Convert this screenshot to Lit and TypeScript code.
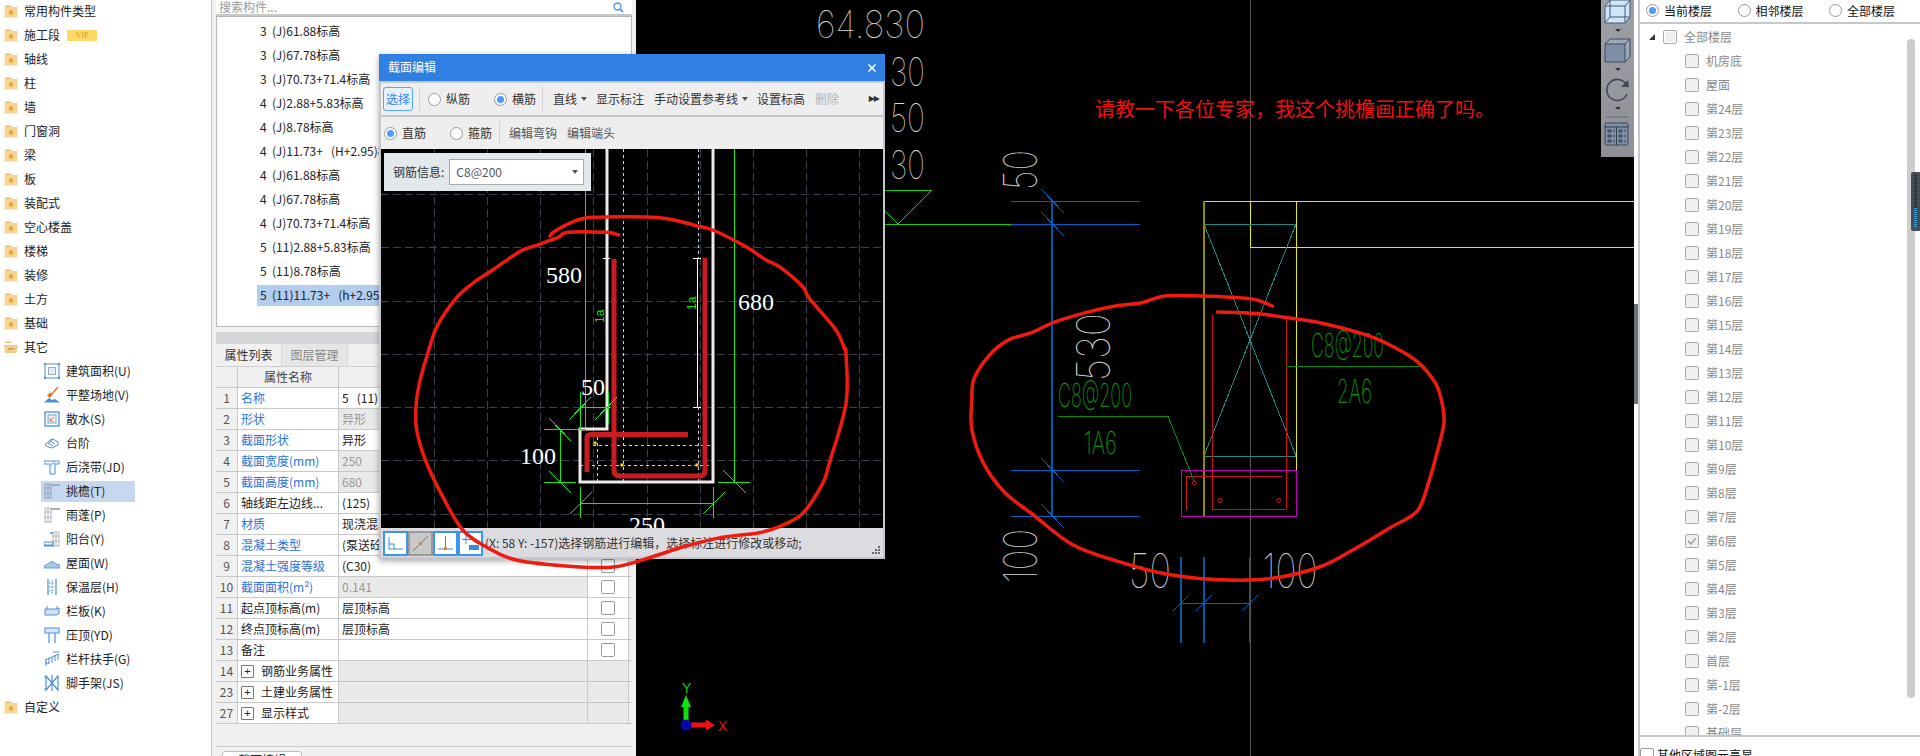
import { LitElement, html, css, svg } from "lit";
import { customElement } from "lit/decorators.js";

type P = [number, number];
function smooth(pts: P[]): string {
  let d = `M${pts[0][0]} ${pts[0][1]}`;
  for (let i = 0; i < pts.length - 1; i++) {
    const p0 = pts[Math.max(0, i - 1)], p1 = pts[i], p2 = pts[i + 1], p3 = pts[Math.min(pts.length - 1, i + 2)];
    const c1 = [p1[0] + (p2[0] - p0[0]) / 6, p1[1] + (p2[1] - p0[1]) / 6];
    const c2 = [p2[0] - (p3[0] - p1[0]) / 6, p2[1] - (p3[1] - p1[1]) / 6];
    d += `C${c1[0].toFixed(1)} ${c1[1].toFixed(1)} ${c2[0].toFixed(1)} ${c2[1].toFixed(1)} ${p2[0].toFixed(1)} ${p2[1].toFixed(1)}`;
  }
  return d;
}
const z3 = (a: number[][]): P[] => a.map(([x, y]) => [x / 3 + 376, y / 3 + 50]);
const z4 = (a: number[][]): P[] => a.map(([x, y]) => [x / 3 + 376, y / 3 + 340]);
const z5 = (a: number[][]): P[] => a.map(([x, y]) => [x / 2.178 + 880, y / 2.074]);

const scribbleDialog: P[] = [
  ...z3([[728, 555], [690, 547], [575, 547], [545, 563], [470, 590], [430, 605], [350, 660], [290, 700], [240, 745], [185, 825], [160, 895]]),
  ...z4([[130, 130], [120, 200], [122, 270], [150, 365], [200, 470], [260, 570], [330, 620], [420, 660], [600, 680], [720, 680], [830, 650], [930, 618], [1040, 592], [1150, 578], [1210, 560], [1280, 520], [1340, 430], [1360, 370], [1410, 190], [1410, 40]]),
  ...z3([[1405, 895], [1380, 840], [1300, 745], [1280, 710], [1210, 650], [1170, 630], [1110, 590], [1010, 540], [960, 527], [850, 503], [650, 502], [580, 520], [530, 548], [522, 558]]),
];
const scribbleCad: P[] = z5([[855, 635], [820, 622], [770, 617], [700, 614], [620, 614], [570, 628], [510, 635], [450, 648], [380, 668], [330, 690], [280, 705], [240, 735], [205, 785], [200, 830], [200, 890], [225, 960], [270, 1020], [330, 1065], [420, 1130], [520, 1165], [620, 1190], [730, 1202], [850, 1200], [960, 1175], [1040, 1135], [1110, 1095], [1170, 1060], [1195, 1000], [1210, 950], [1228, 880], [1225, 840], [1210, 795], [1170, 750], [1120, 720], [1060, 695], [960, 670], [880, 658], [820, 650], [735, 647]]);

const folder = (open = false) => html`<svg class="folder" viewBox="0 0 14 14" width="14" height="14">
  <path d="M1 3V1.6h6l1 1.4z" fill="#e8c27a"></path>
  ${open
    ? svg`<path d="M0 5h14l-1.5 8H1z" fill="#f0cf8e"></path><rect x="4" y="8" width="6" height="1.6" fill="#d2a24c"></rect>`
    : svg`<rect x="0.5" y="3" width="13" height="10.5" fill="#f3d596"></rect><path d="M7 6v5M4.5 8.5h5" stroke="#e59c2f" stroke-width="1.6"></path>`}
</svg>`;

const B = "#4a8fdc";
const G = "#8fa0b4";
const subIcons: Record<string, unknown> = {
  area: svg`<rect x="1" y="1" width="14" height="14" fill="none" stroke="${B}"></rect><rect x="4.5" y="4.5" width="7" height="7" fill="#e8eef6" stroke="#9ab"></rect><path d="M0 0h2v2H0zM14 0h2v2h-2zM0 14h2v2H0zM14 14h2v2h-2z" fill="${B}"></path>`,
  level: svg`<path d="M14 0L7 8" stroke="#e8702a" stroke-width="1.5"></path><path d="M8.5 7L6 11 3 8.500l3-3z" fill="#e8702a"></path><path d="M0 15.500L5 11l3 2 3-1 5 3.500z" fill="${B}"></path>`,
  apron: svg`<rect x="1" y="1" width="14" height="14" fill="#fff" stroke="${B}" stroke-width="1.3"></rect><rect x="4" y="4" width="8" height="8" fill="#eef3f9" stroke="${B}" stroke-width=".8"></rect><path d="M10 6L6.5 9.500M6 7v3h3" stroke="#e8702a" fill="none"></path>`,
  step: svg`<path d="M1 10l5-5 3-1 5 3v3l-6 3-4-1z" fill="#fff" stroke="${B}"></path><path d="M4 8l5 3M6 6l5 3M9 4l-5 5" stroke="${B}" fill="none"></path>`,
  band: svg`<path d="M0 2h15v3h-4v10H6V5H0z" fill="#fff" stroke="${B}"></path><path d="M6 9C6 6 8 4 11 4" stroke="#a8c4e4" stroke-width="2" fill="none"></path>`,
  eave: svg`<path d="M1 1h6v14H1zM1 5h6M1 10h6M4 1v14" fill="none" stroke="${G}"></path><path d="M7 2h9" stroke="${G}" stroke-width="1.5"></path>`,
  canopy: svg`<path d="M1 1h6v14H1zM1 5h6M1 10h6M4 1v14" fill="none" stroke="#aab0b8"></path><path d="M7 2h9" stroke="#8a96a6" stroke-width="1.5"></path>`,
  balcony: svg`<path d="M9 1h6v14H9zM9 5h6M9 10h6M12 1v14" fill="none" stroke="#aab0b8"></path><path d="M0 14h9M0 11h9v4H0z" fill="none" stroke="${B}" stroke-width="1.2"></path><path d="M6 2h3" stroke="${B}" stroke-width="1.5"></path>`,
  roof: svg`<path d="M0 11l5-3 3-2 4 3 4 1v3H0z" fill="#a8c6ea" stroke="${B}" stroke-width=".8"></path>`,
  insul: svg`<path d="M4 0v16M12 0v16" stroke="${B}" stroke-width="1.2"></path><path d="M8 1v14M5 4h6M5 8h6M5 12h6" stroke="${B}" stroke-dasharray="1.5 1.5"></path>`,
  rail: svg`<path d="M1 6h12l2-1v5l-2 2H1z" fill="#cfe0f4" stroke="${B}"></path><path d="M3 6V3M13 6V3" stroke="${B}"></path>`,
  cap: svg`<rect x="1" y="1" width="14" height="5" fill="#dce8f6" stroke="${B}"></rect><path d="M5 6v10M11 6v10" stroke="${B}" stroke-width="1.2"></path>`,
  rail2: svg`<path d="M1 9l14-6M2 8v7M5 7v6M8 6v6M11 4v6M14 3v6M1 12h4" fill="none" stroke="${B}"></path><path d="M9 1h6" stroke="${B}"></path>`,
  scaffold: svg`<path d="M2 0v16M14 0v16M2 1l12 14M14 1L2 15M8 0v16" fill="none" stroke="${B}" stroke-width="1.2"></path><path d="M0 2h2M0 14h2" stroke="${B}"></path>`,
};

const topFolders = ["常用构件类型", "施工段", "轴线", "柱", "墙", "门窗洞", "梁", "板", "装配式", "空心楼盖", "楼梯", "装修", "土方", "基础"];
const subs: [string, string][] = [
  ["建筑面积(U)", "area"], ["平整场地(V)", "level"], ["散水(S)", "apron"], ["台阶", "step"], ["后浇带(JD)", "band"],
  ["挑檐(T)", "eave"], ["雨蓬(P)", "canopy"], ["阳台(Y)", "balcony"], ["屋面(W)", "roof"], ["保温层(H)", "insul"],
  ["栏板(K)", "rail"], ["压顶(YD)", "cap"], ["栏杆扶手(G)", "rail2"], ["脚手架(JS)", "scaffold"],
];
const comps = ["3  (J)61.88标高", "3  (J)67.78标高", "3  (J)70.73+71.4标高", "4  (J)2.88+5.83标高", "4  (J)8.78标高", "4  (J)11.73+   (H+2.95)标高", "4  (J)61.88标高", "4  (J)67.78标高", "4  (J)70.73+71.4标高", "5  (11)2.88+5.83标高", "5  (11)8.78标高", "5  (11)11.73+   (h+2.95)标高"];

type Row = { n: number; name: string; val?: string; blue?: boolean; grayVal?: boolean; check?: boolean; group?: boolean };
const rows: Row[] = [
  { n: 1, name: "名称", val: "5   (11)  11.73+   (h+2.95)标高", blue: true, check: true },
  { n: 2, name: "形状", val: "异形", blue: true, grayVal: true, check: true },
  { n: 3, name: "截面形状", val: "异形", blue: true, check: true },
  { n: 4, name: "截面宽度(mm)", val: "250", blue: true, grayVal: true, check: true },
  { n: 5, name: "截面高度(mm)", val: "680", blue: true, grayVal: true, check: true },
  { n: 6, name: "轴线距左边线...", val: "(125)", check: true },
  { n: 7, name: "材质", val: "现浇混凝土", blue: true, check: true },
  { n: 8, name: "混凝土类型", val: "(泵送砼)", blue: true, check: true },
  { n: 9, name: "混凝土强度等级", val: "(C30)", blue: true, check: true },
  { n: 10, name: "截面面积(m²)", val: "0.141", blue: true, grayVal: true, check: true },
  { n: 11, name: "起点顶标高(m)", val: "层顶标高", check: true },
  { n: 12, name: "终点顶标高(m)", val: "层顶标高", check: true },
  { n: 13, name: "备注", val: "", check: true },
  { n: 14, name: "钢筋业务属性", group: true },
  { n: 23, name: "土建业务属性", group: true },
  { n: 27, name: "显示样式", group: true },
];
const floors = ["机房底", "屋面", ...Array.from({ length: 23 }, (_, i) => `第${24 - i}层`), "首层", "第-1层", "第-2层", "基础层"];

const cadText = (cx: number, cy: number, w: number, h: number, t: string, cls: string, rot = false) => svg`<text class="cad ${cls}" x="${cx}" y="${cy + h / 2}" text-anchor="middle" font-size="${h / 0.727}" textLength="${w}" lengthAdjust="spacingAndGlyphs" transform="${rot ? `rotate(-90 ${cx} ${cy})` : ""}">${t}</text>`;
const ln = (x1: number, y1: number, x2: number, y2: number, cls: string) => svg`<line x1="${x1}" y1="${y1}" x2="${x2}" y2="${y2}" class="${cls}"></line>`;

@customElement("app-root")
export class AppRoot extends LitElement {
  static styles = css`
    :host { display: block; width: 1920px; height: 756px; position: relative; overflow: hidden; background: #f0f0f0;
      font: 12px/1.2 "Noto Sans CJK SC", "Noto Sans", sans-serif; color: #222; }
    .app { display: flex; height: 756px; }
    .tree { width: 211px; height: 756px; background: #fff; border-right: 1px solid #c4c4c4; overflow: hidden; flex: none; }
    .tree-inner { margin-top: -1px; }
    .trow { height: 24px; display: flex; align-items: center; padding-left: 4px; white-space: nowrap; }
    .folder { margin-right: 6px; flex: none; }
    .vip { margin-left: 7px; width: 30px; height: 11px; background: #ffd966; color: #c9a227; font: 8px/11px "Liberation Serif", serif; text-align: center; }
    .srow { height: 24px; display: flex; align-items: center; padding-left: 41px; }
    .sitem { display: flex; align-items: center; height: 21px; width: 94px; padding-left: 3px; box-sizing: border-box; white-space: nowrap; }
    .sitem svg { margin-right: 6px; flex: none; }
    .sitem.cur { background: #c5d8ef; }
    .mid { width: 416px; margin-left: 4px; margin-right: 4px; flex: none; height: 756px; display: flex; flex-direction: column; overflow: hidden; }
    .search { height: 14px; flex: none; background: #fff; border-bottom: 2px solid #c8c8c8; display: flex; align-items: center; justify-content: space-between; padding: 0 8px 0 3px; color: #999; box-sizing: content-box; }
    .list { height: 307px; flex: none; background: #fff; border: 1px solid #b8b8b8; padding: 2px 0 0 40px; overflow: hidden; }
    .citem { height: 24px; display: flex; align-items: center; padding-left: 3px; white-space: pre; }
    .citem span { display: flex; align-items: center; height: 21px; flex: 1; margin-left: -3px; padding-left: 3px; }
    .citem.cur span { background: #b3cdee; }
    .strip { height: 12px; flex: none; margin-top: 5px; background: #d4d6da; }
    .tabs { height: 22px; flex: none; display: flex; background: #f0f0f0; }
    .tab { width: 65px; display: flex; align-items: center; justify-content: center; color: #333; border-right: 1px solid #d8d8d8; }
    .tab.off { color: #888; background: #e6e6e6; }
    .table { flex: none; background: #f0f0f0; }
    .tr { display: grid; grid-template-columns: 22px 101px 249px 41px; height: 21px; box-sizing: border-box; border-bottom: 1px solid #c8c8c8; }
    .tr.head { height: 22px; border-top: 1px solid #d0d0d0; }
    .tr > div { display: flex; align-items: center; padding-left: 3px; border-right: 1px solid #c8c8c8; white-space: pre; overflow: hidden; background: #fff; }
    .tr > .num { background: #f0f0f0; justify-content: center; padding: 0; color: #555; }
    .tr > .gray { background: #e9e9e9; color: #999; }
    .tr > .gfill { background: #e9e9e9; }
    .tr > .hd { background: #f0f0f0; justify-content: center; padding: 0; color: #444; }
    .blue { color: #2c72d8; }
    .tr > .chk { justify-content: center; padding: 0; }
    .cb { width: 12px; height: 12px; border: 1px solid #999; border-radius: 2px; background: #fff; flex: none; }
    .plus { width: 11px; height: 11px; border: 1px solid #777; border-radius: 1px; margin-right: 7px; display: flex; align-items: center; justify-content: center; font: 11px/11px "Liberation Sans", sans-serif; flex: none; background: #fff; }
    .blank { height: 22px; flex: none; background: #f0f0f0; border-bottom: 1px solid #c8c8c8; }
    .bbtn { width: 78px; margin: 4px 0 0 6px; height: 24px; flex: none; background: #fff; border: 1px solid #bbb; border-radius: 3px; text-align: center; line-height: 16px; }
    .cad { width: 998px; flex: none; height: 756px; background: #000; position: relative; overflow: hidden; }
    .cad > svg { display: block; }
    .sidebar { flex: 1; position: relative; height: 756px; background: #fff; display: flex; }
    .gut { width: 4px; flex: none; background: #fff; display: flex; flex-direction: column; }
    .gut i { display: block; margin-top: 304px; height: 100px; background: #6a7178; }
    .rp { flex: 1; border-left: 2px solid #c4c8cc; border-right: 1px solid #c4c8cc; display: flex; flex-direction: column; position: relative; overflow: hidden; }
    .rtop { height: 22px; flex: none; display: flex; align-items: center; padding-left: 6px; border-bottom: 2px solid #c4c8cc; color: #111; }
    .rtop label { display: flex; align-items: center; width: 91.5px; flex: none; }
    .rlist { height: 711px; flex: none; overflow: hidden; padding-top: 1px; box-sizing: border-box; color: #888; }
    .frow { height: 24px; display: flex; align-items: center; }
    .frow.all { padding-left: 9px; }
    .frow.sub { padding-left: 45px; }
    .tri { width: 0; height: 0; border-left: 6px solid transparent; border-bottom: 6px solid #333; margin-right: 8px; }
    .box { width: 12px; height: 12px; border: 1px solid #aaa; border-radius: 2px; background: #f0f0f0; margin-right: 7px; flex: none; display: flex; align-items: center; justify-content: center; }
    .all .box { margin-right: 7px; box-shadow: inset 0 0 0 1px #fff; }
    .rbot { flex: 1; border-top: 2px solid #c8c8c8; display: flex; align-items: flex-start; padding: 11px 0 0 0; color: #111; line-height: 14px; white-space: nowrap; }
    .rbot .cb { margin-right: 3px; }
    .sb { position: absolute; left: 267px; top: 39px; width: 8px; height: 659px; background: #ccc; border-radius: 4px; }
    .handle { position: absolute; left: 271px; top: 172px; display: block; }
    .radio { width: 13px; height: 13px; box-sizing: border-box; border: 1px solid #999; border-radius: 50%; background: #fff; margin-right: 5px; flex: none; display: flex; align-items: center; justify-content: center; }
    .radio.on::after { content: ""; width: 7px; height: 7px; border-radius: 50%; background: #4a9cff; }
    .float { position: absolute; left: 965px; top: 0; width: 33px; height: 157px; background: linear-gradient(#9ea0a6, #8e9096); }
    .float svg { display: block; }
    .dialog { position: absolute; left: 379px; top: 54px; width: 506px; height: 505px; background: #c4c8cc; box-shadow: 0 2px 6px rgba(0,0,0,.35); display: flex; flex-direction: column; }
    .title { height: 27px; flex: none; background: #2f80e2; color: #fff; display: flex; align-items: center; justify-content: space-between; padding: 0 8px 0 9px; }
    .title svg { display: block; }
    .tb { flex: none; background: #eee; margin: 2px 2px 0 2px; height: 32px; display: flex; align-items: center; color: #333; }
    .tb.two { height: 32px; margin-top: 2px; }
    .selbtn { width: 30px; height: 24px; box-sizing: border-box; margin-left: 2px; border: 1px solid #5aa2f2; border-radius: 3px; background: #e6f1fd; color: #2f86ea; display: flex; align-items: center; justify-content: center; }
    .sep { width: 1px; height: 24px; background: #d0d0d0; flex: none; }
    .tb .radio { margin-right: 5px; }
    .tb span { white-space: nowrap; flex: none; }
    .ml3 { margin-left: 3px; } .ml6 { margin-left: 6px; } .ml7 { margin-left: 7px; } .ml8 { margin-left: 8px; } .ml9 { margin-left: 9px; } .ml10 { margin-left: 10px; } .ml24 { margin-left: 24px; } .ml4 { margin-left: 4px; }
    .caret { width: 0; height: 0; border: 3.5px solid transparent; border-top: 4px solid #555; border-bottom: 0; flex: none; }
    .dis { color: #b4b4b4; }
    .dim { color: #555; }
    .more { margin-left: auto; margin-right: 4px; font: 8px/1 "DejaVu Sans", sans-serif; letter-spacing: -1px; color: #333; }
    .canvas { flex: none; height: 379px; margin: 0 2px; background: #000; position: relative; overflow: hidden; }
    .canvas svg { display: block; }
    .info { position: absolute; left: 3px; top: 4px; width: 207px; height: 38px; background: #e3e8ea; display: flex; align-items: center; padding-left: 9px; box-sizing: border-box; color: #333; white-space: nowrap; }
    .sel { margin-left: 5px; width: 135px; height: 26px; box-sizing: border-box; background: #fff; border: 1px solid #aaa; display: flex; align-items: center; justify-content: space-between; padding: 0 5px 0 6px; color: #555; }
    .status { flex: 1; margin: 0 2px 2px; padding: 1px 0 0 2px; background: #dcdce0; display: flex; align-items: center; white-space: nowrap; color: #333; position: relative; }
    .sbtn { width: 25px; height: 25px; box-sizing: border-box; background: #fff; border: 2px solid #3c96f0; flex: none; }
    .sbtn.on { background: #c8c8c8; border-color: #9a9a9a; }
    .sbtn svg { display: block; }
    .status .msg { margin-left: 2px; font-size: 12px; }
    .grip { position: absolute; right: 2px; bottom: 2px; }
    .overlay { position: absolute; left: 0; top: 0; pointer-events: none; }
    text.cad { font-family: Inter, Roboto, "Liberation Sans", sans-serif; font-weight: 100; }
    text.w { fill: #d4d4d4; }
    text.g { fill: #0c8c0c; font-weight: 200; }
    text.d { font-family: "Liberation Serif", serif; font-size: 24px; fill: #fff; text-anchor: middle; }
    text.la { font-family: "Liberation Sans", sans-serif; font-size: 12px; fill: #18e018; }
    text.ask { font-size: 20px; fill: #f01010; font-family: "Noto Sans CJK SC", sans-serif; }
    text.ax { font-family: "Liberation Sans", sans-serif; font-size: 14px; }
    line { shape-rendering: crispEdges; }
    line.bl { stroke: #0060c4; stroke-width: 1; }
    line.bl2 { stroke: #0058a8; stroke-width: 2; }
    line.ye { stroke: #e8e800; stroke-width: 1; }
    line.ol { stroke: #8c8c00; stroke-width: 2; }
    line.te { stroke: #178c8c; stroke-width: 1; }
    line.re { stroke: #d01010; stroke-width: 1; }
    line.gl { stroke: #0a8a0a; stroke-width: 1; }
    line.br { stroke: #12d012; stroke-width: 1; }
    line.grey { stroke: #555; stroke-width: 1; }
    line.gb { stroke: #18e818; stroke-width: 1; }
    line.grid { stroke: #3a4250; stroke-width: 1; stroke-dasharray: 8 4; }
    line.dash { stroke: #c8d4e0; stroke-width: 1; stroke-dasharray: 3 3; }
    line.wh { stroke: #fff; stroke-width: 1; }
    .scrib { fill: none; stroke: #f01a10; stroke-width: 3.5; stroke-linecap: round; stroke-linejoin: round; }
  `;

  private cadDrawing() {
    const ticks: P[] = [[1052, 201], [1052, 224], [1052, 470], [1052, 516]];
    const bt = [1181, 1204, 1250];
    return html`<svg width="998" height="756" viewBox="636 0 998 756">
      ${cadText(870.5, 24, 109, 28, "64.830", "w")}
      ${cadText(907.5, 71, 35, 29, "30", "w")}
      ${cadText(907.5, 117, 35, 29, "50", "w")}
      ${cadText(907.5, 164, 35, 29, "30", "w")}
      ${ln(885, 190, 932, 190, "br")}${ln(932, 190, 898, 224, "br")}${ln(885, 211, 898, 224, "br")}${ln(885, 224, 1052, 224, "br")}
      ${[201.5, 224, 470, 516].map((y) => ln(1011, y, 1140, y, "bl"))}
      ${ln(1052, 201, 1052, 516, "bl2")}
      ${ticks.map(([x, y]) => ln(x - 11, y - 12, x + 12, y + 12, "bl"))}
      ${cadText(1020, 170, 40, 34, "50", "w", true)}
      ${cadText(1093, 347, 68, 34, "530", "w", true)}
      ${cadText(1020, 556, 54, 34, "100", "w", true)}
      ${cadText(1150, 570, 42, 35, "50", "w")}
      ${cadText(1290, 570, 55, 35, "100", "w")}
      ${bt.map((x) => ln(x, 557, x, 643, "bl2"))}
      ${ln(1181, 603, 1250, 603, "bl")}
      ${bt.map((x) => ln(x - 8, 611, x + 8, 595, "bl"))}
      ${ln(1250.5, 0, 1250.5, 756, "grey")}
      ${ln(1204, 201.5, 1634, 201.5, "ye")}${ln(1296, 201, 1296, 470, "ye")}${ln(1250.5, 201, 1250.5, 247.5, "ye")}${ln(1250, 247.5, 1634, 247.5, "ye")}
      ${ln(1204, 224, 1296, 224, "te")}${ln(1204, 456, 1296, 456, "te")}${ln(1204, 224, 1296, 456, "te")}${ln(1296, 224, 1204, 456, "te")}
      ${ln(1204, 201, 1204, 516, "ol")}
      ${ln(1212, 315, 1212, 509, "re")}${ln(1286, 316, 1286, 509, "re")}${ln(1212, 509, 1286, 509, "re")}
      ${ln(1186, 510, 1186, 476, "re")}${ln(1186, 476, 1282, 476, "re")}
      <rect x="1181" y="470" width="115" height="46" fill="none" stroke="#c000c0" shape-rendering="crispEdges"></rect>
      ${[[1194.5, 483], [1220, 500.5], [1279, 500.5]].map(([x, y]) => svg`<circle cx="${x}" cy="${y}" r="2" fill="none" stroke="#e01010"></circle>`)}
      ${ln(1286, 366, 1426, 366, "gl")}${ln(1058, 416.5, 1168, 416.5, "gl")}${ln(1168, 416.5, 1194.5, 482, "gl")}
      ${cadText(1095, 395, 74, 24, "C8@200", "g")}
      ${cadText(1100.5, 442.5, 33, 23, "1A6", "g")}
      ${cadText(1347.5, 344.5, 73, 24, "C8@200", "g")}
      ${cadText(1354.5, 391, 35, 24, "2A6", "g")}
      <text class="ask" x="1095" y="117">请教一下各位专家，我这个挑檐画正确了吗。</text>
      <path d="M683.5 725v-18h-2.5l5-12 5 12h-2.500v18z" fill="#10e010"></path>
      <path d="M686 722.500h20v-3l9 5.500-9 5.500v-3h-20z" fill="#f01010"></path>
      <circle cx="686" cy="725" r="5.500" fill="#0808a8"></circle>
      <text class="ax" x="682" y="693" fill="#10d010">Y</text>
      <text class="ax" x="718" y="731" fill="#e81010">X</text>
    </svg>`;
  }

  private dialogDrawing() {
    const hg = [194, 247, 301, 354, 407, 460, 514];
    const vg = [434, 487, 540, 593, 647, 700, 753, 806, 859];
    const R = "#c81c22";
    return html`<svg width="502" height="379" viewBox="381 149 502 379">
      ${hg.map((y) => ln(381, y, 883, y, "grid"))}
      ${vg.map((x) => ln(x, 149, x, 528, "grid"))}
      ${ln(585, 149, 585, 429, "gb")}${ln(734, 149, 734, 482, "gb")}
      ${ln(623, 149, 623, 482, "dash")}${ln(698, 149, 698, 258, "dash")}${ln(698, 407, 698, 482, "dash")}
      ${ln(593, 445, 713, 445, "dash")}${ln(580, 465, 713, 465, "dash")}${ln(597, 437, 597, 482, "dash")}
      ${ln(697, 258, 697, 407, "wh")}${ln(693, 258, 701, 258, "wh")}${ln(693, 407, 701, 407, "wh")}
      ${ln(603, 258, 610, 258, "wh")}${ln(603, 407, 610, 407, "wh")}
      <path d="M607 149V429H580V482H713V149" fill="none" stroke="#ececec" stroke-width="3"></path>
      <path d="M614 259V470Q614 476 620 476H700Q705 476 705 470V258" fill="none" stroke="${R}" stroke-width="5"></path>
      <path d="M587 472V438Q587 434.500 591 434.500H688" fill="none" stroke="${R}" stroke-width="5"></path>
      ${[[595, 443], [622, 465], [697, 465]].map(([x, y]) => svg`<circle cx="${x}" cy="${y}" r="1.800" fill="#f0d030" stroke="#806000" stroke-width=".5"></circle>`)}
      ${ln(544, 429, 586, 429, "gb")}${ln(544, 482, 576, 482, "gb")}${ln(560, 429, 560, 482, "gb")}
      ${ln(549, 418, 571, 441, "gb")}${ln(549, 471, 571, 493, "gb")}
      ${ln(580, 407, 608, 407, "gb")}${ln(580, 392, 580, 429, "gb")}${ln(608, 392, 608, 424, "gb")}
      ${ln(569, 420, 591, 397, "gb")}${ln(595, 420, 617, 397, "gb")}
      ${ln(580, 503, 713, 503, "gb")}${ln(580, 487, 580, 518, "gb")}${ln(713, 487, 713, 518, "gb")}
      ${ln(570, 514, 592, 492, "gb")}${ln(703, 514, 725, 492, "gb")}
      ${ln(718, 482, 750, 482, "gb")}${ln(723, 470, 746, 493, "gb")}
      <text class="d" x="564" y="283">580</text>
      <text class="d" x="756" y="310">680</text>
      <text class="d" x="593" y="395">50</text>
      <text class="d" x="538" y="464">100</text>
      <text class="d" x="647" y="533">250</text>
      <text class="la" transform="translate(604 323) rotate(-90)">1a</text>
      <text class="la" transform="translate(696 310) rotate(-90)">1a</text>
    </svg>`;
  }

  render() {
    return html`<div class="app">
      <div class="tree"><div class="tree-inner">
        ${topFolders.map((t) => html`<div class="trow">${folder()}<span>${t}</span>${t === "施工段" ? html`<span class="vip">VIP</span>` : ""}</div>`)}
        <div class="trow">${folder(true)}<span>其它</span></div>
        ${subs.map(([t, k]) => html`<div class="srow"><div class="sitem ${k === "eave" ? "cur" : ""}"><svg width="16" height="16" viewBox="0 0 16 16">${subIcons[k]}</svg><span>${t}</span></div></div>`)}
        <div class="trow">${folder()}<span>自定义</span></div>
      </div></div>
      <div class="mid">
        <div class="search"><span>搜索构件...</span>
          <svg width="11" height="11" viewBox="0 0 11 11"><circle cx="4.500" cy="4.500" r="3.500" fill="none" stroke="#5a9ad8" stroke-width="1.400"></circle><path d="M7 7l3 3" stroke="#5a9ad8" stroke-width="1.800"></path></svg>
        </div>
        <div class="list">${comps.map((c, i) => html`<div class="citem ${i === 11 ? "cur" : ""}"><span>${c}</span></div>`)}</div>
        <div class="strip"></div>
        <div class="tabs"><div class="tab">属性列表</div><div class="tab off">图层管理</div></div>
        <div class="table">
          <div class="tr head"><div class="hd"></div><div class="hd">属性名称</div><div class="hd"></div><div class="hd"></div></div>
          ${rows.map((r) => html`<div class="tr">
            <div class="num">${r.n}</div>
            <div class="${r.blue ? "blue" : ""}">${r.group ? html`<span class="plus">+</span>` : ""}${r.name}</div>
            <div class="${r.group ? "gfill" : r.grayVal ? "gray" : ""}">${r.val ?? ""}</div>
            <div class="chk ${r.group ? "gfill" : ""}">${r.check ? html`<span class="cb"></span>` : ""}</div>
          </div>`)}
        </div>
        <div class="blank"></div>
        <div class="bbtn">截面编辑</div>
      </div>
      <div class="cad">
        ${this.cadDrawing()}
        <div class="float">
          <svg width="33" height="157" viewBox="0 0 33 157">
            <path d="M4 6l5-6h20v17l-5 6H4z" fill="#cfe4fb" stroke="#46586e"></path><path d="M4 6h20v17M24 6l5-6M9 0v17h20M9 17l-5 6" fill="none" stroke="#46586e"></path>
            <path d="M14 29h6l-3 3z" fill="#333"></path>
            <path d="M4 44l5-5h20v18l-5 5z" fill="#9aa8bc" stroke="#3e4a5c"></path><path d="M4 44h20v18H4z" fill="#7e8ea6" stroke="#3e4a5c"></path><path d="M24 44l5-5" stroke="#3e4a5c"></path>
            <path d="M14 68h6l-3 3z" fill="#333"></path>
            <path d="M25 84A10.500 10.500 0 1 0 26 94" fill="none" stroke="#3e4a5c" stroke-width="1.600"></path><path d="M20 87l8 0 -1-7z" fill="#3e4a5c"></path>
            <path d="M14 107h6l-3 3z" fill="#333"></path>
            <path d="M5 117h23" stroke="#6a6c72"></path>
            <rect x="4" y="123" width="23" height="22" rx="1" fill="#7e8ea6" stroke="#3e4a5c"></rect>
            <path d="M4 127h23M15.500 127v18M7 130h3v2H7zM7 135h3v2H7zM7 140h3v2H7zM18 130h3v2h-3zM18 135h3v2h-3zM18 140h3v2h-3zM12 131h2M12 136h2M12 141h2M23 131h2M23 136h2M23 141h2" fill="none" stroke="#1e2a3a" stroke-width=".8"></path>
          </svg>
        </div>
      </div>
      <div class="sidebar">
        <div class="gut"><i></i></div>
        <div class="rp">
          <div class="rtop">
            <label><span class="radio on"></span><span>当前楼层</span></label>
            <label><span class="radio"></span><span>相邻楼层</span></label>
            <label><span class="radio"></span><span>全部楼层</span></label>
          </div>
          <div class="rlist">
            <div class="frow all"><span class="tri"></span><span class="box"></span><span>全部楼层</span></div>
            ${floors.map((f) => html`<div class="frow sub"><span class="box">${f === "第6层" ? html`<svg width="10" height="10" viewBox="0 0 10 10"><path d="M1 5l3 3 5-6" fill="none" stroke="#aaa" stroke-width="1.800"></path></svg>` : ""}</span><span>${f}</span></div>`)}
          </div>
          <div class="rbot"><span class="cb"></span><span>其他区域图元亮显</span></div>
          <div class="sb"></div>
          <svg class="handle" width="10" height="59" viewBox="0 0 10 59">
            <rect width="10" height="59" rx="2" fill="#454c55"></rect>
            <path d="M4.500 3v33" stroke="#23282e" stroke-width="3" stroke-dasharray="1 1"></path>
            <path d="M4.500 36v20" stroke="#3f9ad0" stroke-width="3" stroke-dasharray="1 1"></path>
          </svg>
        </div>
      </div>
    </div>
    <div class="dialog">
      <div class="title"><span>截面编辑</span><svg width="10" height="10" viewBox="0 0 10 10"><path d="M1.500 1.500l7 7M8.500 1.500l-7 7" stroke="#fff" stroke-width="1.600"></path></svg></div>
      <div class="tb">
        <div class="selbtn">选择</div><div class="sep ml6"></div>
        <span class="radio ml8"></span><span>纵筋</span>
        <span class="radio on ml24"></span><span>横筋</span><div class="sep ml6"></div>
        <span class="ml10">直线</span><i class="caret ml4"></i>
        <span class="ml9">显示标注</span>
        <span class="ml10">手动设置参考线</span><i class="caret ml4"></i>
        <span class="ml9">设置标高</span>
        <span class="ml10 dis">删除</span>
        <span class="more">▶▶</span>
      </div>
      <div class="tb two">
        <span class="radio on ml3"></span><span>直筋</span>
        <span class="radio ml24"></span><span>箍筋</span><div class="sep ml7"></div>
        <span class="ml9 dim">编辑弯钩</span><span class="ml10 dim">编辑端头</span>
      </div>
      <div class="canvas">
        ${this.dialogDrawing()}
        <div class="info"><span>钢筋信息:</span><div class="sel"><span>C8@200</span><i class="caret"></i></div></div>
      </div>
      <div class="status">
        <div class="sbtn"><svg width="21" height="21" viewBox="0 0 21 21"><path d="M4 4v12h14M4 11h5v5" fill="none" stroke="#3a8ae0"></path></svg></div>
        <div class="sbtn on"><svg width="21" height="21" viewBox="0 0 21 21"><path d="M3 18L18 3" stroke="#4a7ab8"></path><rect x="9" y="9" width="3" height="3" fill="#e88020"></rect></svg></div>
        <div class="sbtn"><svg width="21" height="21" viewBox="0 0 21 21"><path d="M10.500 3v13M3 16h15" stroke="#3a8ae0"></path><rect x="9" y="14" width="3" height="3" fill="#e88020"></rect></svg></div>
        <div class="sbtn"><svg width="21" height="21" viewBox="0 0 21 21"><path d="M6 2v9M2 6.500h9" stroke="#3a8ae0"></path><rect x="9" y="12" width="10" height="5" fill="#3a8ae0"></rect></svg></div>
        <span class="msg">(X: 58 Y: -157)选择钢筋进行编辑，选择标注进行修改或移动;</span>
        <svg class="grip" width="9" height="9" viewBox="0 0 9 9"><path d="M6 0h2v2H6zM3 3h2v2H3zM6 3h2v2H6zM0 6h2v2H0zM3 6h2v2H3zM6 6h2v2H6z" fill="#666"></path></svg>
      </div>
    </div>
    <svg class="overlay" width="1920" height="756" viewBox="0 0 1920 756">
      <path class="scrib" d="${smooth(scribbleDialog)}"></path>
      <path class="scrib" d="${smooth(scribbleCad)}"></path>
    </svg>`;
  }
}
